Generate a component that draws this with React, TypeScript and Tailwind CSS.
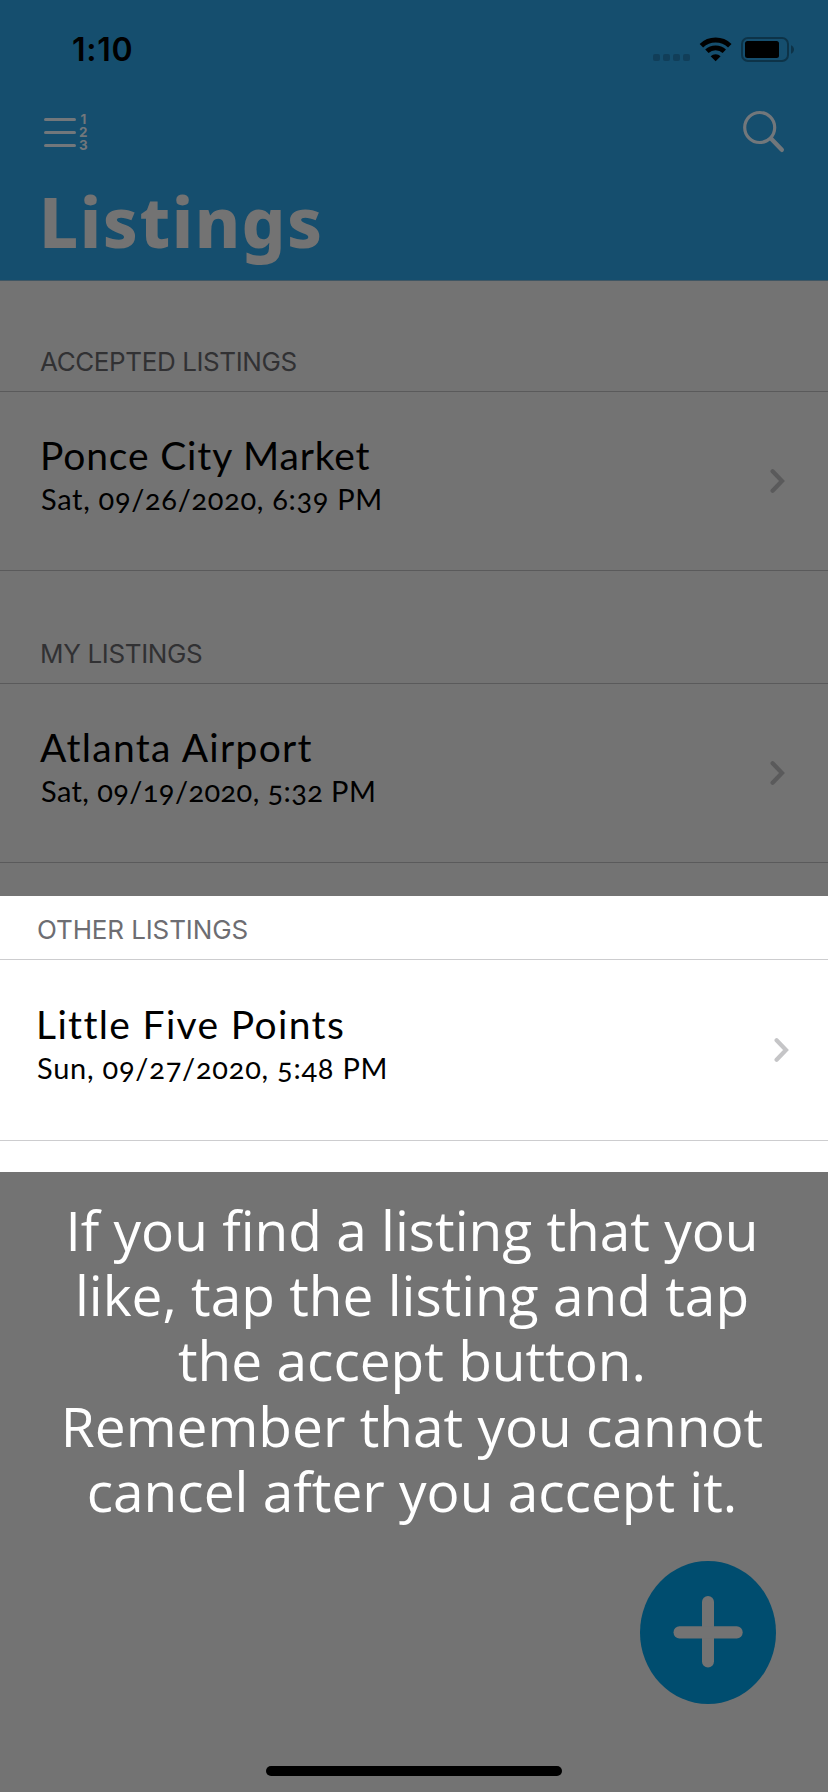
type Listing = {
  section: string;
  sectionStyle: string;
  name: string;
  nameSpacing: string;
  date: string;
  dateSpacing: string;
};

const accepted: Listing = {
  section: "ACCEPTED LISTINGS",
  sectionStyle: "h-[110px] -ml-px tracking-[-0.4px]",
  name: "Ponce City Market",
  nameSpacing: "tracking-[0.85px]",
  date: "Sat, 09/26/2020, 6:39 PM",
  dateSpacing: "tracking-[0.68px]",
};

const mine: Listing = {
  section: "MY LISTINGS",
  sectionStyle: "h-[112px] -ml-px tracking-[-0.35px]",
  name: "Atlanta Airport",
  nameSpacing: "tracking-[1.3px]",
  date: "Sat, 09/19/2020, 5:32 PM",
  dateSpacing: "tracking-[0.4px]",
};

const other: Listing = {
  section: "OTHER LISTINGS",
  sectionStyle: "h-[63px] tracking-[-0.12px]",
  name: "Little Five Points",
  nameSpacing: "tracking-[1.35px]",
  date: "Sun, 09/27/2020, 5:48 PM",
  dateSpacing: "tracking-[0.75px]",
};

function StatusIcons() {
  return (
    <svg width="144" height="30" viewBox="652 34 144 30" fill="none">
      <g fill="#113e59">
        <rect x="653" y="54" width="7" height="7" rx="2" />
        <rect x="663" y="54" width="7" height="7" rx="2" />
        <rect x="673" y="54" width="7" height="7" rx="2" />
        <rect x="683" y="54" width="7" height="7" rx="2" />
      </g>
      <path d="M701.4 45.8A20.5 20.5 0 0 1 729.8 45.8" stroke="#000" strokeWidth="5" />
      <path d="M706.9 51.3A12.5 12.5 0 0 1 724.3 51.3" stroke="#000" strokeWidth="4.8" />
      <path d="M715.6 61.2L710.6 56.2A7.4 7.4 0 0 1 720.6 56.2Z" fill="#000" />
      <rect x="742" y="38" width="46" height="23" rx="6" stroke="#0d3348" strokeWidth="2" />
      <rect x="745" y="41" width="34" height="17" rx="2.5" fill="#000" />
      <path d="M791 45.2C793 46 794 47.6 794 49.5S793 53 791 53.8Z" fill="#0d3348" />
    </svg>
  );
}

function NumberedListIcon() {
  return (
    <div className="flex h-[39px] items-center gap-[3px]">
      <div className="flex flex-col gap-[10px]">
        <div className="h-[3px] w-8 rounded-full bg-[#72777b]" />
        <div className="h-[3px] w-8 rounded-full bg-[#72777b]" />
        <div className="h-[3px] w-8 rounded-full bg-[#72777b]" />
      </div>
      <div className="flex flex-col text-center text-[13.5px] leading-[13px] font-bold text-[#72777b]">
        <span>1</span>
        <span>2</span>
        <span>3</span>
      </div>
    </div>
  );
}

function Section({ item, lit = false }: { item: Listing; lit?: boolean }) {
  const line = lit ? "border-[#cdcdcf]" : "border-[#5a5a5b]";
  return (
    <section className={lit ? "flex flex-col pl-[37px]" : "flex flex-col pl-[41px]"}>
      <h2
        className={`${lit ? "pb-[13px] text-[#6d6d72]" : "pb-[13px] text-[#313133]"} ${item.sectionStyle} flex items-end text-[26px] leading-8`}
      >
        {item.section}
      </h2>
      <div
        className={`${line} ${lit ? "-ml-[37px] h-[182px] pl-[37px]" : "-ml-[41px] h-[180px] pl-[41px]"} flex justify-between border-y text-black`}
      >
        <div
          className={`${lit ? "pt-10" : "pt-[39px]"} flex flex-col gap-[2px] font-['Lato',sans-serif] [font-feature-settings:'onum']`}
        >
          <div className={`${item.nameSpacing} -ml-px text-[39px] leading-[48px]`}>{item.name}</div>
          <div className={`${item.dateSpacing} text-[29px] leading-9`}>{item.date}</div>
        </div>
        <svg
          className={lit ? "mt-[77px] mr-[38px]" : "mt-[76px] mr-[42px]"}
          width="16"
          height="26"
          viewBox="0 0 16 26"
          fill="none"
          stroke={lit ? "#c5c5c7" : "#5a5a5b"}
          strokeWidth="4.2"
          strokeLinecap="round"
          strokeLinejoin="miter"
        >
          <path d="M2.6 3.2L12 13L2.6 22.8" />
        </svg>
      </div>
    </section>
  );
}

export default function App() {
  return (
    <div className="flex h-[1792px] w-[828px] flex-col overflow-hidden bg-[#737373] font-['Inter',sans-serif]">
      <header className="flex h-[281px] flex-col border-b border-[#3f5664] bg-[#154e6e]">
        <div className="flex h-[100px] items-start justify-between pt-[34px] pr-8 pl-[72px]">
          <span className="text-[32px] leading-8 font-semibold tracking-[0.74px] text-black">1:10</span>
          <StatusIcons />
        </div>
        <div className="flex h-[64px] items-center justify-between pr-[42px] pl-[44px]">
          <NumberedListIcon />
          <svg width="44" height="44" viewBox="742 110 44 44" fill="none" stroke="#72777b">
            <circle cx="759.7" cy="127.5" r="15" strokeWidth="3.2" />
            <path d="M771.2 138.8L781.8 149.8" strokeWidth="4.4" strokeLinecap="round" />
          </svg>
        </div>
        <h1 className="mt-[9px] pl-[39px] font-['Noto_Sans',sans-serif] text-[69px] leading-[96px] font-extrabold tracking-[1.5px] text-[#737373]">
          Listings
        </h1>
      </header>

      <Section item={accepted} />
      <Section item={mine} />

      <div className="mt-[33px] h-[276px] bg-white">
        <Section item={other} lit />
      </div>

      <p className="mt-[25px] pr-[4px] text-center font-['Open_Sans',sans-serif] text-[55px] leading-[65.2px] text-white">
        If you find a listing that you
        <br />
        like, tap the listing and tap
        <br />
        the accept button.
        <br />
        Remember that you cannot
        <br />
        cancel after you accept it.
      </p>

      <div className="mt-[38px] mr-[52px] flex justify-end">
        <svg width="136" height="143" viewBox="0 0 136 143">
          <ellipse cx="68" cy="71.5" rx="68" ry="71.5" fill="#004d6f" />
          <rect x="62" y="35" width="12" height="71.5" rx="6" fill="#737373" />
          <rect x="33.5" y="65.2" width="69.2" height="12.4" rx="6" fill="#737373" />
        </svg>
      </div>

      <div className="mt-auto mb-4 h-[10px] w-[296px] self-center rounded-full bg-black" />
    </div>
  );
}
